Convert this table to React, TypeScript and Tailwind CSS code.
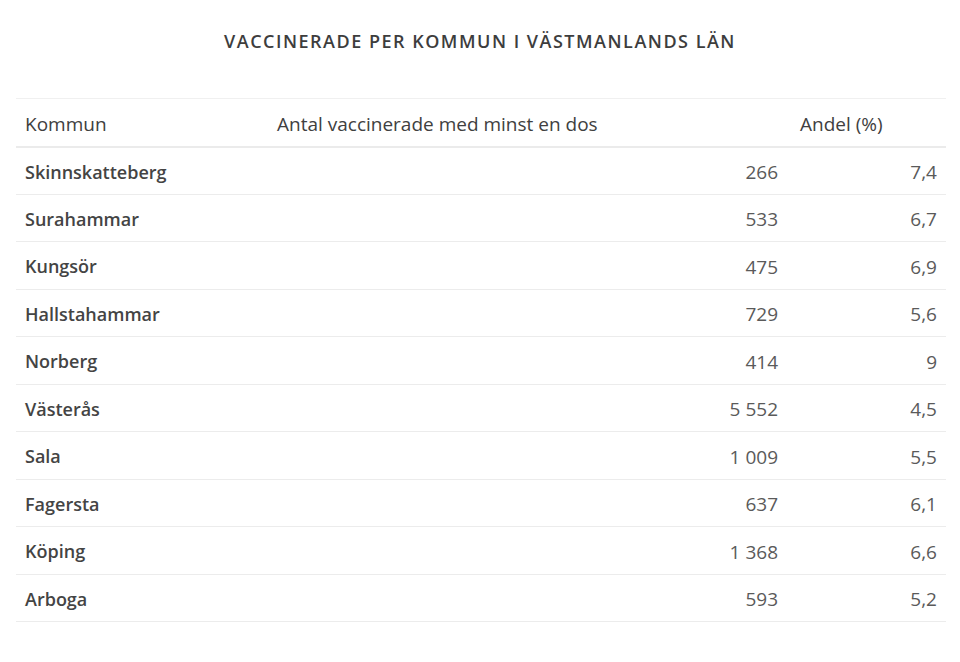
const ROWS: [string, string, string][] = [
  ["Skinnskatteberg", "266", "7,4"],
  ["Surahammar", "533", "6,7"],
  ["Kungsör", "475", "6,9"],
  ["Hallstahammar", "729", "5,6"],
  ["Norberg", "414", "9"],
  ["Västerås", "5 552", "4,5"],
  ["Sala", "1 009", "5,5"],
  ["Fagersta", "637", "6,1"],
  ["Köping", "1 368", "6,6"],
  ["Arboga", "593", "5,2"],
];

export default function App() {
  return (
    <div className="min-h-screen bg-white px-4 pt-[28px] font-['Open_Sans',sans-serif] text-[#404040]">
      <h2 className="text-center text-[18px] font-semibold leading-[26px] tracking-[1.5px] text-[#3d3d3d]">
        VACCINERADE PER KOMMUN I VÄSTMANLANDS LÄN
      </h2>

      <table className="mt-[44px] w-[930px] border-collapse text-[19px]">
        <thead>
          <tr className="h-[48px] border-t border-b-2 border-t-[#f0f0f0] border-b-[#ebebeb]">
            <th className="w-[251px] px-[9px] pt-[4px] text-left font-normal">Kommun</th>
            <th className="w-[523px] px-[10px] pt-[4px] text-left font-normal">Antal vaccinerade med minst en dos</th>
            <th className="px-[10px] pt-[4px] text-left font-normal">Andel (%)</th>
          </tr>
        </thead>
        <tbody>
          {ROWS.map(([name, count, share]) => (
            <tr key={name} className="h-[47.5px] border-b border-[#ececec]">
              <td className="px-[9px] pt-[3px] text-[18px] font-semibold text-[#444]">{name}</td>
              <td className="pr-[12px] pl-[10px] pt-[3px] text-right text-[#5a5a5a]">{count}</td>
              <td className="px-[9px] pt-[3px] text-right text-[#5a5a5a]">{share}</td>
            </tr>
          ))}
        </tbody>
      </table>
    </div>
  );
}
